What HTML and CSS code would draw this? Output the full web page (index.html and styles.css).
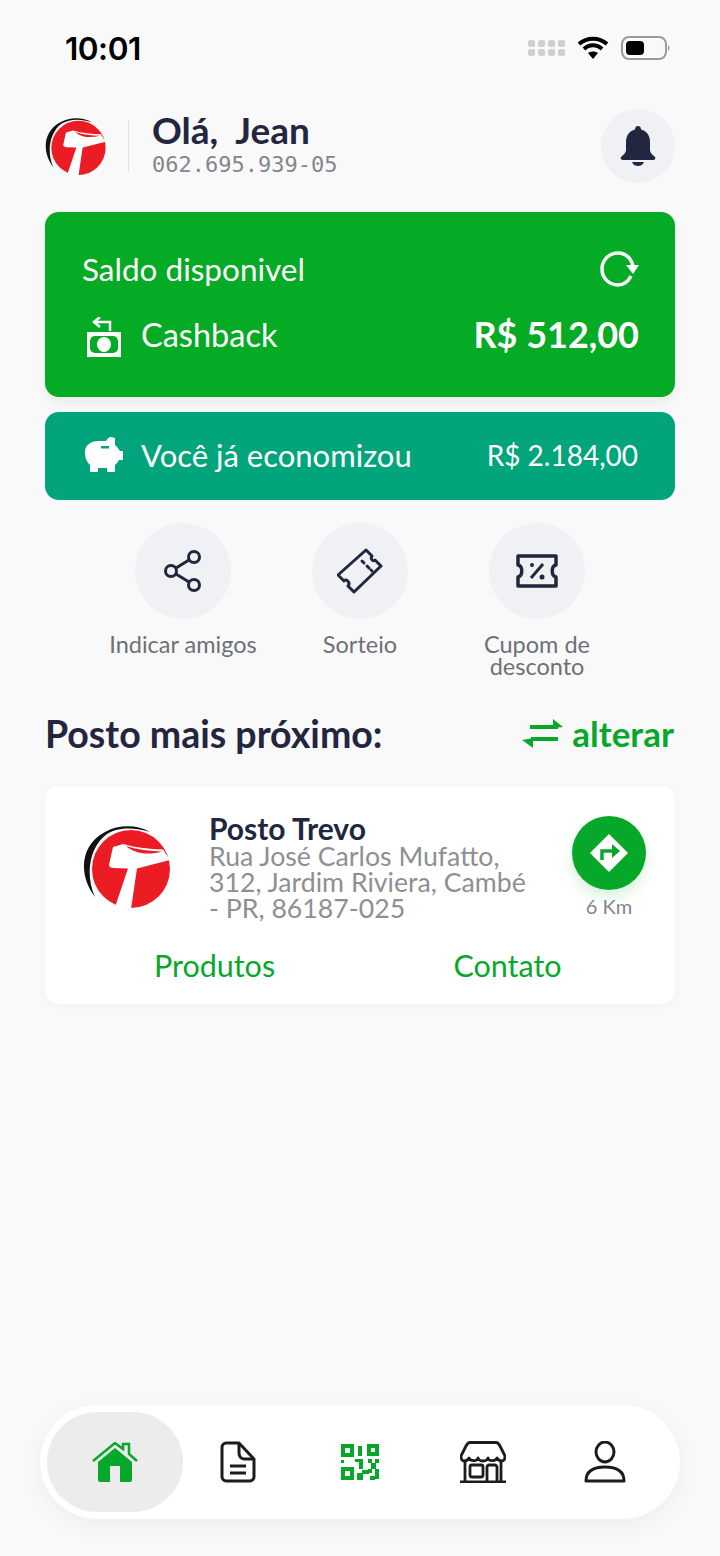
FILE: index.html
```html
<!DOCTYPE html>
<html lang="pt-BR">
<head>
    <meta charset="UTF-8">
    <meta name="viewport" content="width=device-width, initial-scale=1.0">
    <title>Posto Trevo</title>
    <link rel="stylesheet" href="styles.css">
</head>
<body>
    <svg class="defs" width="0" height="0">
        <symbol id="logo" viewBox="10 12 92 90">
            <path d="M25 87C8 65 10 35 35 22C50 14 68 15 80 22C65 17 48 17 37 24C19 37 15 65 25 87Z" fill="#111"/>
            <circle cx="61" cy="59" r="39" fill="#ec1c24"/>
            <path d="M43 37C47 36 50 35 53 34C66 38 80 39 93 39.500L100 50L67 58.500L61 99L45 97L58 58.500L44 58C41 58 39 57 39 55Z" fill="#fff"/>
            <path d="M56 36C68 40 80 41 92 41.500C78 45.500 64 43.500 56 36Z" fill="#ec1c24"/>
        </symbol>
    </svg>

    <div class="page">
        <div class="status">
            <span class="time">10:01</span>
            <div class="status-icons">
                <svg width="37" height="18" viewBox="0 0 37 18" fill="#cfcfcf">
                    <rect x="0" y="1" width="7" height="7" rx="2"/><rect x="10" y="1" width="7" height="7" rx="2"/><rect x="20" y="1" width="7" height="7" rx="2"/><rect x="30" y="1" width="7" height="7" rx="2"/>
                    <rect x="0" y="10" width="7" height="7" rx="2"/><rect x="10" y="10" width="7" height="7" rx="2"/><rect x="20" y="10" width="7" height="7" rx="2"/><rect x="30" y="10" width="7" height="7" rx="2"/>
                </svg>
                <svg width="32" height="24" viewBox="0 0 32 24" fill="none" stroke="#000" stroke-width="4">
                    <path d="M2 8C10 1 22 1 30 8"/><path d="M7 13C12 8 20 8 25 13"/>
                    <path d="M16 23L11 17C14 15 18 15 21 17Z" fill="#000" stroke="none"/>
                </svg>
                <svg width="50" height="24" viewBox="0 0 50 24">
                    <rect x="1" y="1" width="44" height="22" rx="7" fill="none" stroke="#9a9a9a" stroke-width="2"/>
                    <rect x="5" y="5" width="18" height="14" rx="4" fill="#000"/>
                    <path d="M47 9C49 10 49 14 47 15Z" fill="#9a9a9a"/>
                </svg>
            </div>
        </div>

        <header class="top">
            <svg class="top-logo"><use href="#logo"/></svg>
            <span class="top-divider"></span>
            <div class="top-text">
                <h1>Olá,&nbsp; Jean</h1>
                <p>062.695.939-05</p>
            </div>
            <button class="bell">
                <svg width="36" height="40" viewBox="0 0 36 40" fill="#23263f">
                    <path d="M18 0C20 0 21 1.500 21 3.500C27 5 30 10 30 16V24C30 27 33 29 35 31C36 32.500 35 34 33 34H3C1 34 0 32.500 1 31C3 29 6 27 6 24V16C6 10 9 5 15 3.500C15 1.500 16 0 18 0Z"/>
                    <path d="M12 36H24C23 39 20 40 18 40C16 40 13 39 12 36Z"/>
                </svg>
            </button>
        </header>

        <section class="card-saldo">
            <div class="row">
                <span class="saldo-label">Saldo disponivel</span>
                <svg width="40" height="40" viewBox="0 0 40 40" fill="none" stroke="#fff" stroke-width="3.500">
                    <path d="M32 27C29 33 24 36 19 36C10 36 3 29 3 20C3 11 10 4 19 4C27 4 33 10 34 18"/>
                    <path d="M27 16H40L34 25Z" fill="#fff" stroke="none"/>
                </svg>
            </div>
            <div class="row">
                <div class="row-left">
                    <svg class="icon-cash" width="36" height="40" viewBox="0 0 36 40">
                        <path d="M24 14V5H9" fill="none" stroke="#fff" stroke-width="2.500"/>
                        <path d="M14 0L8 5L14 10" fill="none" stroke="#fff" stroke-width="2.500"/>
                        <rect x="1" y="15" width="34" height="25" fill="#fff"/>
                        <rect x="4" y="19" width="28" height="17" rx="5" fill="#05aa25"/>
                        <ellipse cx="18" cy="27.500" rx="7" ry="7.500" fill="#fff"/>
                    </svg>
                    <span class="row-title title-cash">Cashback</span>
                </div>
                <span class="saldo-value">R$ 512,00</span>
            </div>
        </section>

        <section class="card-economia">
            <div class="row-left">
                <svg class="icon-pig" width="38" height="36" viewBox="0 0 38 36">
                    <path fill-rule="evenodd" fill="#fff" d="M26 0L30 1V8C33 10 34 13 35 14H38V23H34C33 25 32 26 30 28V35H22V31H13V35H5V28C1 24 0 20 0 15C0 8 6 4 13 4H21C22 2 24 0 26 0ZM16 9V11.500H24V9Z"/>
                </svg>
                <span class="row-title">Você já economizou</span>
            </div>
            <span class="economia-value">R$ 2.184,00</span>
        </section>

        <nav class="actions">
            <a class="action">
                <span class="action-circle">
                    <svg width="38" height="42" viewBox="0 0 38 42" fill="none" stroke="#23263f" stroke-width="3">
                        <circle cx="30" cy="7" r="5.500"/><circle cx="7" cy="21" r="5.500"/><circle cx="30" cy="35" r="5.500"/>
                        <path d="M12 18L25 10M12 24L25 32"/>
                    </svg>
                </span>
                <span class="action-label">Indicar amigos</span>
            </a>
            <a class="action">
                <span class="action-circle">
                    <svg width="46" height="46" viewBox="0 0 46 46" fill="none" stroke="#23263f" stroke-width="3" stroke-linejoin="round">
                        <path d="M29 2L35 8C33 11 36 14 38 12L44 18L17 44L11 38C14 35 9 30 7 33L1 27Z"/>
                        <path d="M25 13L27 15M30 18L32 20M34 22L35 23" stroke-linecap="round"/>
                    </svg>
                </span>
                <span class="action-label">Sorteio</span>
            </a>
            <a class="action">
                <span class="action-circle">
                    <svg width="42" height="34" viewBox="0 0 42 34" fill="none" stroke="#23263f" stroke-width="3.500" stroke-linejoin="round">
                        <path d="M2 2H40V11C35 12 35 22 40 23V32H2V23C7 22 7 12 2 11Z"/>
                        <path d="M27 10L15 24" stroke-width="3"/>
                        <circle cx="16" cy="11" r="2" fill="#23263f" stroke="none"/><circle cx="26" cy="23" r="2.500" fill="#23263f" stroke="none"/>
                    </svg>
                </span>
                <span class="action-label">Cupom de desconto</span>
            </a>
        </nav>

        <div class="section-head">
            <h2>Posto mais próximo:</h2>
            <a class="alterar">
                <svg width="42" height="32" viewBox="0 0 42 32" fill="none" stroke="#07a82a" stroke-width="4">
                    <path d="M8 10H36M9 22H36"/>
                    <path d="M31 2L41 10L31 11Z" fill="#07a82a" stroke="none"/>
                    <path d="M11 21L0 23L11 31Z" fill="#07a82a" stroke="none"/>
                </svg>
                alterar
            </a>
        </div>

        <section class="posto">
            <div class="posto-main">
                <svg class="posto-logo"><use href="#logo"/></svg>
                <div class="posto-info">
                    <h3>Posto Trevo</h3>
                    <p>Rua José Carlos Mufatto, 312, Jardim Riviera, Cambé - PR, 86187-025</p>
                </div>
                <div class="posto-route">
                    <span class="route-btn">
                        <svg width="38" height="38" viewBox="0 0 38 38">
                            <path d="M19 0L38 19L19 38L0 19Z" fill="#fff"/>
                            <path d="M12 26V17H24" fill="none" stroke="#07a82a" stroke-width="3.500"/>
                            <path d="M22 10L30 17L22 24Z" fill="#07a82a"/>
                        </svg>
                    </span>
                    <span class="route-km">6 Km</span>
                </div>
            </div>
            <div class="posto-links">
                <a>Produtos</a>
                <a>Contato</a>
            </div>
        </section>

        <footer class="tabbar">
            <a class="tab tab-active">
                <svg width="46" height="40" viewBox="0 0 46 40">
                    <path d="M1 19L23 1L31 7V2H37V12L45 19" fill="none" stroke="#07a82a" stroke-width="2.500"/>
                    <path fill-rule="evenodd" fill="#07a82a" d="M23 6L40 20V38C40 39 39 40 38 40H8C7 40 6 39 6 38V20ZM18 24V40H28V24Z"/>
                </svg>
            </a>
            <a class="tab">
                <svg width="36" height="42" viewBox="0 0 36 42" fill="none" stroke="#1c1c1c" stroke-width="3" stroke-linejoin="round">
                    <path d="M6 2H19L34 18V36C34 38 32 40 30 40H6C4 40 2 38 2 36V6C2 4 4 2 6 2Z"/>
                    <path d="M19 2V12C19 15 21 18 24 18H34"/>
                    <path d="M10 25H26M10 32H26"/>
                </svg>
            </a>
            <a class="tab">
                <svg width="38" height="36" viewBox="0 0 38 36" fill="#07a82a">
                    <path fill-rule="evenodd" d="M0 0H13V13H0ZM4 4V9H9V4Z"/>
                    <path fill-rule="evenodd" d="M26 0H38V12H26ZM30 4V8H34V4Z"/>
                    <path fill-rule="evenodd" d="M0 23H13V36H0ZM4 27V32H9V27Z"/>
                    <rect x="17" y="2" width="4" height="10"/>
                    <rect x="0" y="16" width="3" height="3"/>
                    <rect x="14" y="15" width="8" height="3"/><rect x="18" y="15" width="4" height="10"/>
                    <rect x="27" y="15" width="4" height="4"/><rect x="34" y="15" width="4" height="4"/>
                    <rect x="30" y="19" width="5" height="6"/><rect x="34" y="25" width="4" height="10"/><rect x="27" y="25" width="4" height="4"/>
                    <rect x="21" y="26" width="7" height="4"/><rect x="16" y="29" width="6" height="7"/><rect x="29" y="32" width="5" height="4"/>
                </svg>
            </a>
            <a class="tab">
                <svg width="46" height="42" viewBox="0 0 46 42" fill="none" stroke="#1c1c1c" stroke-width="2.800" stroke-linejoin="round">
                    <path d="M10 1.500H36C38 1.500 39 3 40 5L44 13C46 16 44.500 20 42 20C39.500 20 38 19 37 17C36 20 29 21 28 17C27 21 19 21 18 17C17 21 10 20 9 17C8 19 6.500 20 4 20C1.500 20 0 16 2 13L6 5C7 3 8 1.500 10 1.500Z"/>
                    <path d="M5 20V41M41 20V41M0 41H46"/>
                    <rect x="10" y="24" width="13" height="12" rx="2"/>
                    <path d="M27 41V26C27 25 28 24 29 24H35C36 24 37 25 37 26V41"/>
                </svg>
            </a>
            <a class="tab">
                <svg width="42" height="42" viewBox="0 0 42 42" fill="none" stroke="#1c1c1c" stroke-width="3">
                    <ellipse cx="21" cy="11" rx="9" ry="10"/>
                    <path d="M2 40C2 30 10 26 21 26C32 26 40 30 40 40Z" stroke-linejoin="round"/>
                </svg>
            </a>
        </footer>
    </div>
</body>
</html>
```

FILE: styles.css
```css
* {
    box-sizing: border-box;
}

body {
    margin: 0;
    background-color: #f9f9fa;
    font-family: Lato, "Open Sans", sans-serif;
    color: #23263f;
}

h1, h2, h3, p {
    margin: 0;
}

.defs {
    position: absolute;
}

.page {
    display: flex;
    flex-direction: column;
    width: 720px;
    height: 1556px;
    padding: 0 45px;
}

/* barra de status */
.status {
    display: flex;
    justify-content: space-between;
    align-items: center;
    height: 96px;
    padding: 0 4px 0 20px;
}

.time {
    font-family: Inter, sans-serif;
    font-size: 31.500px;
    font-weight: 600;
    color: #000;
    letter-spacing: -0.5px;
}

.status-icons {
    display: flex;
    align-items: center;
    gap: 12px;
}

/* topo */
.top {
    display: flex;
    align-items: center;
    height: 74px;
    margin-top: 13px;
}

.top-logo {
    width: 64px;
    height: 63px;
    margin-left: -2px;
}

.top-divider {
    width: 1px;
    height: 52px;
    margin-left: 21px;
    background-color: #e2e3e6;
}

.top-text {
    flex: 1;
    margin-left: 23px;
    padding-bottom: 3px;
}

.top-text h1 {
    font-size: 37px;
    font-weight: 700;
    line-height: 33px;
}

.top-text p {
    font-family: "DejaVu Sans Mono", monospace;
    font-size: 22px;
    line-height: 24px;
    color: #85868c;
    margin-top: 7px;
}

.bell {
    display: flex;
    align-items: center;
    justify-content: center;
    width: 74px;
    height: 74px;
    padding: 0;
    border: none;
    border-radius: 50%;
    background-color: #f0f1f5;
}

/* cartoes verdes */
.card-saldo {
    display: flex;
    flex-direction: column;
    gap: 22px;
    height: 185px;
    margin-top: 29px;
    padding: 37px 36px 0 37px;
    border-radius: 14px;
    background-color: #05aa25;
    color: #fff;
    box-shadow: 0 6px 12px rgba(0, 0, 0, 0.06);
}

.row {
    display: flex;
    justify-content: space-between;
    align-items: center;
}

.row-left {
    display: flex;
    align-items: center;
}

.icon-cash {
    margin-left: 4px;
    margin-top: 6px;
}

.icon-pig {
    margin-left: 3px;
}

.saldo-label {
    font-size: 31.500px;
}

.row-title {
    margin-left: 18px;
    font-size: 31px;
}

.title-cash {
    font-size: 32.500px;
    margin-left: 19px;
}

.saldo-value {
    font-size: 36px;
    font-weight: 700;
}

.card-economia {
    display: flex;
    justify-content: space-between;
    align-items: center;
    height: 88px;
    margin-top: 15px;
    padding: 0 37px 3px;
    border-radius: 14px;
    background-color: #02a57b;
    color: #fff;
}

.economia-value {
    font-size: 28px;
}

/* atalhos */
.actions {
    display: grid;
    grid-template-columns: repeat(3, 177px);
    justify-content: center;
    margin-top: 23px;
}

.action {
    display: flex;
    flex-direction: column;
    align-items: center;
}

.action-circle {
    display: flex;
    align-items: center;
    justify-content: center;
    width: 96px;
    height: 96px;
    border-radius: 50%;
    background-color: #f0f1f5;
}

.action-label {
    width: 130px;
    margin-top: 14px;
    font-size: 23.500px;
    line-height: 22px;
    text-align: center;
    color: #6f7076;
}

.action:first-child .action-label {
    width: 170px;
}

/* posto */
.section-head {
    display: flex;
    justify-content: space-between;
    align-items: center;
    margin-top: 34px;
    height: 44px;
}

.section-head h2 {
    font-size: 37.500px;
    font-weight: 700;
}

.alterar {
    display: flex;
    align-items: center;
    gap: 8px;
    margin-right: 1px;
    font-size: 35px;
    font-weight: 700;
    color: #07a82a;
}

.posto {
    height: 218px;
    margin-top: 31px;
    padding: 29px 29px 0 35px;
    border-radius: 14px;
    background-color: #fff;
    box-shadow: 0 2px 10px rgba(0, 0, 0, 0.03);
}

.posto-main {
    display: flex;
    align-items: flex-start;
}

.posto-logo {
    width: 92px;
    height: 90px;
    margin-top: 7px;
}

.posto-info {
    width: 325px;
    margin-left: 37px;
}

.posto-info h3 {
    font-size: 30px;
    font-weight: 700;
    line-height: 26px;
    margin-bottom: 2px;
}

.posto-info p {
    font-size: 26.700px;
    line-height: 26px;
    color: #8e8f94;
}

.posto-route {
    display: flex;
    flex-direction: column;
    align-items: center;
    margin-left: auto;
    margin-top: 1px;
}

.route-btn {
    display: flex;
    align-items: center;
    justify-content: center;
    width: 74px;
    height: 74px;
    border-radius: 50%;
    background-color: #07a82a;
    box-shadow: 0 8px 14px rgba(7, 168, 42, 0.15);
}

.route-km {
    margin-top: 4px;
    font-size: 20px;
    color: #85868c;
}

.posto-links {
    display: grid;
    grid-template-columns: 293px 293px;
    justify-items: center;
    margin-top: 26px;
    margin-left: -12px;
    font-size: 30.500px;
    color: #07a82a;
}

/* menu inferior */
.tabbar {
    display: grid;
    grid-template-columns: repeat(5, 122.500px);
    align-items: center;
    justify-items: center;
    width: 640px;
    height: 114px;
    margin: auto -5px 37px;
    padding-left: 14px;
    border-radius: 57px;
    background-color: #fff;
    box-shadow: 0 6px 24px rgba(0, 0, 0, 0.05);
}

.tab {
    display: flex;
    align-items: center;
    justify-content: center;
}

.tab-active {
    width: 136px;
    height: 100px;
    border-radius: 50px;
    background-color: #ececec;
}
```
